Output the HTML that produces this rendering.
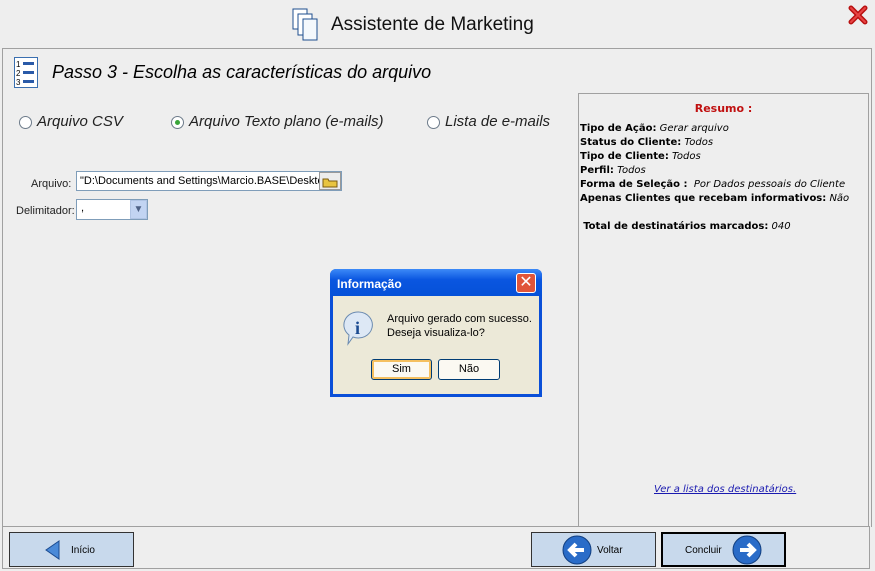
<!DOCTYPE html>
<html><head><meta charset="utf-8"><style>
body{margin:0;width:875px;height:571px;background:#eeeeee;font-family:"Liberation Sans",sans-serif;position:relative;overflow:hidden}
.a{position:absolute}
.it{font-style:italic}
.rb{font-family:"DejaVu Sans",sans-serif;font-size:10px;color:#000;line-height:14px}
.rb b{font-weight:bold}
.rb i{font-style:italic;font-weight:normal}
.btn{position:absolute;background:#c8d9ec;border:1px solid #333;box-sizing:border-box;font-size:10px}
.radio{position:absolute;width:11px;height:11px;border:1px solid #6d7b8a;border-radius:50%;background:#fff}
</style></head><body>
<!-- title -->
<svg class="a" style="left:292px;top:8px" width="32" height="34" viewBox="0 0 32 34">
<rect x="1" y="1" width="14" height="20" fill="#fff" stroke="#1f4f8f"/>
<rect x="6" y="6" width="14" height="21" fill="#fff" stroke="#1f4f8f"/>
<rect x="11" y="11" width="14" height="21" fill="#f4f8fc" stroke="#1f4f8f"/>
</svg>
<div class="a" style="left:331px;top:14px;font-size:19px;color:#111">Assistente de Marketing</div>
<svg class="a" style="left:848px;top:5px" width="20" height="20" viewBox="0 0 20 20"><path d="M3 3L17 17M17 3L3 17" stroke="#b81010" stroke-width="5" stroke-linecap="round"/><path d="M3 3L17 17M17 3L3 17" stroke="#e84444" stroke-width="2" stroke-linecap="round"/></svg>
<!-- main frame -->
<div class="a" style="left:2px;top:48px;width:868px;height:478px;border:1px solid #a0a0a0;border-bottom:none"></div>
<svg class="a" style="left:14px;top:57px" width="24" height="31" viewBox="0 0 24 31"><rect x="0.5" y="0.5" width="23" height="30" fill="#fff" stroke="#3a6fb0"/><text x="2" y="10" font-size="8" font-family="Liberation Sans">1</text><text x="2" y="19" font-size="8" font-family="Liberation Sans">2</text><text x="2" y="28" font-size="8" font-family="Liberation Sans">3</text><rect x="9" y="5" width="11" height="3" fill="#2a5aa8"/><rect x="9" y="14" width="11" height="3" fill="#2a5aa8"/><rect x="9" y="23" width="11" height="3" fill="#2a5aa8"/></svg>
<div class="a it" style="left:52px;top:62px;font-size:18px;color:#000">Passo 3 - Escolha as características do arquivo</div>
<!-- radios -->
<div class="radio" style="left:19px;top:116px"></div>
<div class="a it" style="left:37px;top:113px;font-size:15px;color:#222">Arquivo CSV</div>
<div class="radio" style="left:171px;top:116px"><div style="position:absolute;left:3px;top:3px;width:5px;height:5px;border-radius:50%;background:#3aa53a"></div></div>
<div class="a it" style="left:189px;top:113px;font-size:15px;color:#222">Arquivo Texto plano (e-mails)</div>
<div class="radio" style="left:427px;top:116px"></div>
<div class="a it" style="left:445px;top:113px;font-size:15px;color:#222">Lista de e-mails</div>
<!-- fields -->
<div class="a" style="left:31px;top:178px;font-size:11px;color:#222">Arquivo:</div>
<div class="a" style="left:76px;top:171px;width:266px;height:20px;background:#fff;border:1px solid #7f9db9;box-sizing:border-box;font-size:11px;line-height:18px;padding-left:3px;white-space:nowrap;overflow:hidden">"D:\Documents and Settings\Marcio.BASE\Deskto</div>
<div class="a" style="left:319px;top:172px;width:22px;height:18px;background:#ececec;border:1px solid #999;box-sizing:border-box"><svg width="20" height="16"><path d="M3 6h5l1 2h8v6H3z" fill="#e8c440" stroke="#7a5a10"/></svg></div>
<div class="a" style="left:16px;top:205px;font-size:11px;color:#222">Delimitador:</div>
<div class="a" style="left:76px;top:199px;width:72px;height:21px;background:#fff;border:1px solid #7f9db9;box-sizing:border-box;font-size:11px;padding-left:4px;line-height:17px">,</div>
<div class="a" style="left:130px;top:200px;width:17px;height:19px;background:#c2d4f2;border:1px solid #b0c4e4;box-sizing:border-box;color:#4d6185;font-size:10px;text-align:center;line-height:17px">▼</div>
<!-- summary -->
<div class="a" style="left:578px;top:93px;width:291px;height:434px;border:1px solid #a0a0a0;box-sizing:border-box"></div>
<div class="a rb" style="left:578px;top:102px;width:291px;text-align:center;color:#c01010;font-weight:bold;font-size:11px">Resumo :</div>
<div class="a rb" style="left:580px;top:122px;white-space:nowrap">
<b>Tipo de Ação:</b> <i>Gerar arquivo</i><br><b>Status do Cliente:</b> <i>Todos</i><br><b>Tipo de Cliente:</b> <i>Todos</i><br><b>Perfil:</b> <i>Todos</i><br><b>Forma de Seleção :</b>&nbsp; <i>Por Dados pessoais do Cliente</i><br><b>Apenas Clientes que recebam informativos:</b> <i>Não</i><br><br>&nbsp;<b>Total de destinatários marcados:</b> <i>040</i></div>
<div class="a rb it" style="left:654px;top:483px;color:#1a1ab0;text-decoration:underline;font-style:italic">Ver a lista dos destinatários.</div>
<!-- bottom -->
<div class="a" style="left:2px;top:526px;width:868px;height:43px;border:1px solid #a0a0a0;box-sizing:border-box"></div>
<div class="btn" style="left:9px;top:532px;width:125px;height:35px"><svg class="a" style="left:34px;top:7px" width="18" height="20"><path d="M15 1L2 10L15 19z" fill="#4a8ad8" stroke="#1a4a90"/></svg><span class="a" style="left:61px;top:12px">Início</span></div>
<div class="btn" style="left:531px;top:532px;width:125px;height:35px"><svg class="a" style="left:30px;top:2px" width="30" height="30"><circle cx="15" cy="15" r="14" fill="#2a6cc8" stroke="#123f80"/><path d="M22 15H9M14 9l-6 6 6 6" stroke="#fff" stroke-width="4" fill="none"/></svg><span class="a" style="left:65px;top:12px">Voltar</span></div>
<div class="btn" style="left:661px;top:532px;width:125px;height:35px;border:2px solid #000"><span class="a" style="left:22px;top:11px">Concluir</span><svg class="a" style="left:69px;top:1px" width="30" height="30"><circle cx="15" cy="15" r="14" fill="#2a6cc8" stroke="#123f80"/><path d="M8 15H21M16 9l6 6-6 6" stroke="#fff" stroke-width="4" fill="none"/></svg></div>
<!-- dialog -->
<div class="a" style="left:330px;top:269px;width:212px;height:128px;background:#0a4fd8;border-radius:6px 6px 0 0">
<div class="a" style="left:0;top:0;width:212px;height:27px;background:linear-gradient(#3d8af7,#0a56e0 40%,#0551d8);border-radius:6px 6px 0 0"></div>
<div class="a" style="left:7px;top:8px;color:#fff;font-weight:bold;font-size:12px">Informação</div>
<div class="a" style="left:186px;top:4px;width:20px;height:20px;background:#e0553a;border:1px solid #fff;border-radius:3px;box-sizing:border-box;color:#fff;text-align:center;font-size:16px;line-height:18px">✕</div>
<div class="a" style="left:3px;top:27px;width:206px;height:98px;background:#ece9d8">
<svg class="a" style="left:10px;top:14px" width="34" height="36"><path d="M16 2a14 13 0 1 1-6 25l-5 7 1-9A14 13 0 0 1 16 2z" fill="#dde8f5" stroke="#6a8ab0"/><text x="12" y="24" font-size="18" font-weight="bold" fill="#1a4a90" font-family="Liberation Serif">i</text></svg>
<div class="a" style="left:54px;top:16px;font-size:11px;line-height:14px;color:#000">Arquivo gerado com sucesso.<br>Deseja visualiza-lo?</div>
<div class="a" style="left:38px;top:63px;width:61px;height:21px;border:1px solid #003c74;border-radius:3px;background:#fbf9f2;box-shadow:inset 0 0 0 2px #f5c060;box-sizing:border-box;font-size:11px;text-align:center;line-height:19px">Sim</div>
<div class="a" style="left:105px;top:63px;width:62px;height:21px;border:1px solid #003c74;border-radius:3px;background:#fbf9f2;box-sizing:border-box;font-size:11px;text-align:center;line-height:19px">Não</div>
</div></div>
</body></html>
